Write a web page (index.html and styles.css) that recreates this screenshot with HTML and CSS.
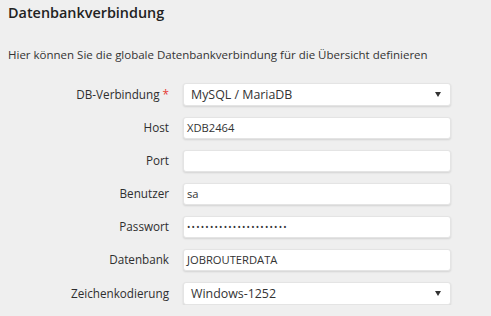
FILE: index.html
```html
<!DOCTYPE html>
<html lang="de">
<head>
<meta charset="utf-8">
<link rel="stylesheet" href="styles.css">
</head>
<body>
<div class="panel">
  <h2 class="title">Datenbankverbindung</h2>
  <p class="desc">Hier können Sie die globale Datenbankverbindung für die Übersicht definieren</p>
  <div class="form">
    <label class="lbl">DB-Verbindung <span class="req">*</span></label>
    <div class="field select"><span>MySQL / MariaDB</span><span class="arrow"></span></div>
    <label class="lbl">Host</label>
    <div class="field input">XDB2464</div>
    <label class="lbl">Port</label>
    <div class="field input"></div>
    <label class="lbl">Benutzer</label>
    <div class="field input">sa</div>
    <label class="lbl">Passwort</label>
    <div class="field input pw">••••••••••••••••••••••</div>
    <label class="lbl">Datenbank</label>
    <div class="field input">JOBROUTERDATA</div>
    <label class="lbl">Zeichenkodierung</label>
    <div class="field select"><span>Windows-1252</span><span class="arrow"></span></div>
  </div>
</div>
</body>
</html>
```
FILE: styles.css
```css
html, body {
  margin: 0;
  padding: 0;
  background: #efefef;
}
body {
  font-family: "Open Sans", "DejaVu Sans", sans-serif;
  color: #333;
}
.panel {
  padding: 3px 8px 0 8px;
}
.title {
  margin: 0;
  font-size: 14.4px;
  font-weight: 600;
  line-height: 20px;
  color: #222;
}
.desc {
  margin: 23px 0 0 0;
  font-size: 11.5px;
  line-height: 17px;
  color: #333;
}
.form {
  margin-top: 20px;
  display: grid;
  grid-template-columns: 161px 268px;
  column-gap: 14px;
  row-gap: 11px;
  align-items: center;
}
.lbl {
  text-align: right;
  font-size: 11.7px;
  color: #2e2e2e;
  padding-bottom: 2px;
}
.req {
  color: #e53935;
}
.field {
  box-sizing: border-box;
  height: 22px;
  background: #fff;
  border: 1px solid #e4e4e4;
  border-radius: 3px;
  box-shadow: 0 1px 2px rgba(0,0,0,0.12);
  font-size: 11.2px;
  line-height: 20px;
  color: #333;
}
.input {
  padding: 0 3px;
}
.select {
  height: 23px;
  line-height: 21px;
  padding: 0 8px 0 7px;
  display: flex;
  justify-content: space-between;
  align-items: center;
  font-size: 12.4px;
}
.arrow {
  width: 0;
  height: 0;
  border-left: 3px solid transparent;
  border-right: 3px solid transparent;
  border-top: 5px solid #333;
  margin-right: 1px;
}
.pw {
  font-size: 9px;
  letter-spacing: 1.2px;
}
```
